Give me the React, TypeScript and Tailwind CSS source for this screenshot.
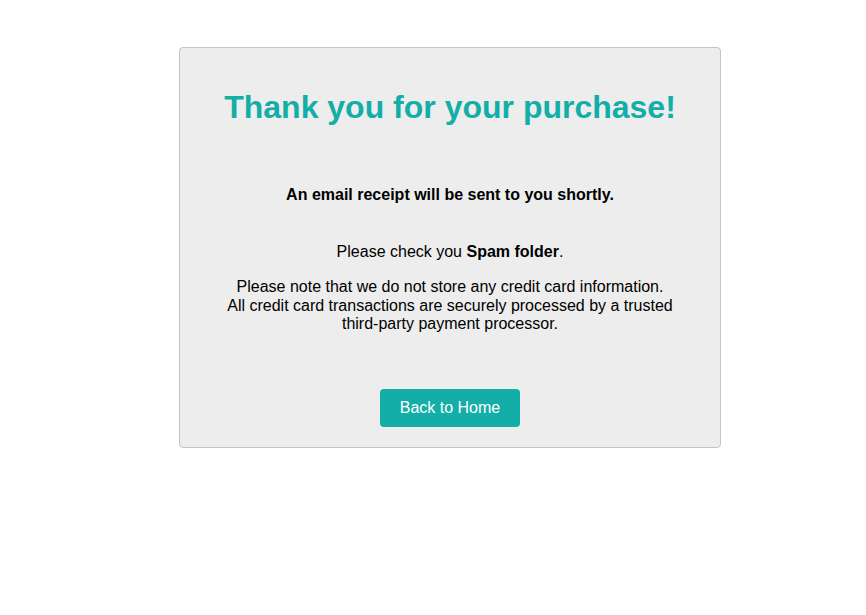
import React from "react";

export default function App() {
  return (
    <div className="min-h-screen bg-white pt-[47px] pl-[179px] font-['Liberation_Sans',Arial,sans-serif] text-black">
      <div className="w-[542px] h-[401px] rounded-[4px] border border-[#c4c4c4] bg-[#ededed] px-10 pt-[41px] text-center">
        <h1 className="text-[32px] leading-[37px] font-bold text-[#13aea7]">
          Thank you for your purchase!
        </h1>

        <p className="mt-[60px] text-base leading-[18.4px] font-bold">
          An email receipt will be sent to you shortly.
        </p>

        <p className="mt-[38.5px] text-base leading-[18.4px]">
          Please check you <b>Spam folder</b>.
        </p>

        <p className="mt-[17px] text-base leading-[18.4px]">
          Please note that we do not store any credit card information.
          <br />
          All credit card transactions are securely processed by a trusted third-party payment processor.
        </p>

        <button className="mt-[55px] h-[38px] rounded-[4px] bg-[#13aea7] px-5 text-base text-white">
          Back to Home
        </button>
      </div>
    </div>
  );
}
